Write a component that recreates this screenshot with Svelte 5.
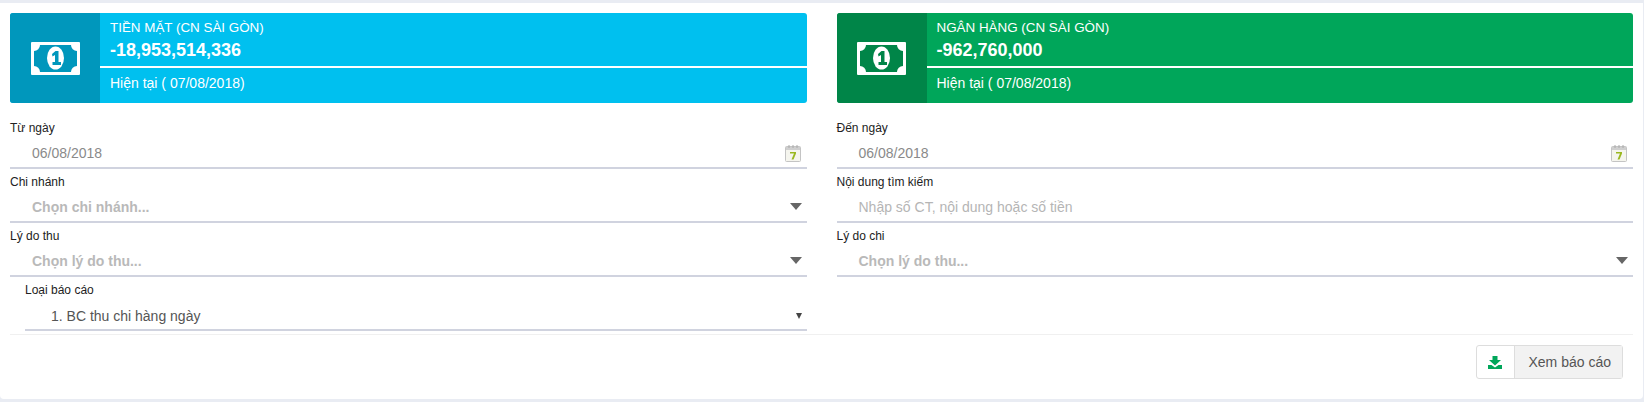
<script>
	const banners = [
		{ title: 'TIỀN MẶT (CN SÀI GÒN)', amount: '-18,953,514,336', tone: 'cash' },
		{ title: 'NGÂN HÀNG (CN SÀI GÒN)', amount: '-962,760,000', tone: 'bank' }
	];
</script>

{#snippet money()}
	<svg class="money" width="49" height="33" viewBox="0 0 49 33">
		<path
			fill="#fff"
			fill-rule="evenodd"
			d="M1 0h47a1 1 0 0 1 1 1v31a1 1 0 0 1-1 1H1a1 1 0 0 1-1-1V1a1 1 0 0 1 1-1zM9 3H40A6 6 0 0 0 46 9V24A6 6 0 0 0 40 30H9A6 6 0 0 0 3 24V9A6 6 0 0 0 9 3z"
		/>
		<ellipse cx="24.500" cy="16" rx="8.500" ry="11.500" fill="#fff" />
		<path class="one" d="M21 12l3.500-3h3v11h2.500v3h-8.500v-3h2.500v-7l-2.500 1.500z" />
	</svg>
{/snippet}

{#snippet calendar()}
	<svg class="cal" width="18" height="18" viewBox="0 0 18 18">
		<rect x="1.500" y="2.500" width="15" height="15" rx="1" fill="#f5f5ee" stroke="#c4c4c4" />
		<rect x="2" y="3" width="14" height="3" fill="#cfcfcf" />
		<path d="M5 1v3M9 1v3M13 1v3" stroke="#aaa" />
		<path d="M6 8h6v1.500l-2.500 6H7.500l2.500-6H6z" fill="#9ab81f" />
	</svg>
{/snippet}

{#snippet caret()}
	<svg class="caret" width="12" height="7" viewBox="0 0 12 7"><path d="M0 0h12L6 7z" fill="#666" /></svg>
{/snippet}

<div class="card">
	<div class="grid">
		{#each banners as b}
			<div class="banner {b.tone}">
				<div class="icon">{@render money()}</div>
				<div class="info">
					<div class="top">
						<div class="title">{b.title}</div>
						<div class="amount">{b.amount}</div>
					</div>
					<div class="now">Hiện tại ( 07/08/2018)</div>
				</div>
			</div>
		{/each}

		<div class="field first">
			<div class="label">Từ ngày</div>
			<div class="control"><span class="value">06/08/2018</span>{@render calendar()}</div>
		</div>
		<div class="field first">
			<div class="label">Đến ngày</div>
			<div class="control"><span class="value">06/08/2018</span>{@render calendar()}</div>
		</div>

		<div class="field">
			<div class="label">Chi nhánh</div>
			<div class="control"><span class="ph">Chọn chi nhánh...</span>{@render caret()}</div>
		</div>
		<div class="field">
			<div class="label">Nội dung tìm kiếm</div>
			<div class="control"><span class="hint">Nhập số CT, nội dung hoặc số tiền</span></div>
		</div>

		<div class="field">
			<div class="label">Lý do thu</div>
			<div class="control"><span class="ph">Chọn lý do thu...</span>{@render caret()}</div>
		</div>
		<div class="field">
			<div class="label">Lý do chi</div>
			<div class="control"><span class="ph">Chọn lý do thu...</span>{@render caret()}</div>
		</div>

		<div class="field report">
			<div class="label">Loại báo cáo</div>
			<div class="control">
				<span class="picked">1. BC thu chi hàng ngày</span>
				<span class="small-caret"></span>
			</div>
		</div>
	</div>

	<div class="footer">
		<button class="view">
			<span class="btn-icon">
				<svg width="14" height="13" viewBox="0 0 14 13">
					<path d="M4.500 0h5v4H13L7 9.500 1 4h3.500z" fill="#00a65a" />
					<path d="M0 9h3.500L7 11.500 10.500 9H14v4H0z" fill="#00a65a" />
				</svg>
			</span>
			<span class="btn-text">Xem báo cáo</span>
		</button>
	</div>
</div>

<style>
	:global(body) {
		background: #e9ecf3;
		font-family: 'Liberation Sans', Arial, sans-serif;
	}

	.card {
		box-sizing: border-box;
		height: 396px;
		margin: 3px 1px 0 0;
		padding: 10px 10px 0;
		background: #fff;
		border-radius: 0 0 4px 4px;
	}

	.grid {
		display: grid;
		grid-template-columns: 1fr 1fr;
		column-gap: 30px;
	}

	.banner {
		display: flex;
		height: 90px;
		border-radius: 3px;
		overflow: hidden;
		color: #fff;
	}

	.cash { background: #00c0ef; }
	.cash .icon { background: #0097bc; }
	.cash .one { fill: #0097bc; }
	.bank { background: #00a65a; }
	.bank .icon { background: #008548; }
	.bank .one { fill: #008548; }

	.icon {
		width: 90px;
		flex: none;
		display: flex;
		align-items: center;
		justify-content: center;
	}

	.info {
		flex: 1;
		display: flex;
		flex-direction: column;
	}

	.top {
		height: 55px;
		box-sizing: border-box;
		padding: 6px 10px 0;
		border-bottom: 2px solid #fff;
	}

	.title {
		font-size: 13.400px;
		line-height: 18px;
	}

	.amount {
		font-size: 18px;
		font-weight: 700;
		line-height: 24px;
		margin-top: 1px;
	}

	.now {
		padding: 5px 10px 0;
		font-size: 14px;
		line-height: 20px;
	}

	.field {
		height: 54px;
		box-sizing: border-box;
		padding-top: 5px;
	}

	.field.first {
		height: 66px;
		padding-top: 17px;
	}

	.label {
		font-size: 12px;
		line-height: 16px;
		color: #222;
	}

	.control {
		box-sizing: border-box;
		display: flex;
		align-items: center;
		justify-content: space-between;
		height: 33px;
		padding: 2px 2px 0 22px;
		font-size: 14px;
		border-bottom: 2px solid #d0d3df;
	}

	.value { color: #8a8a8a; }
	.hint { color: #b5b5b5; }
	.ph { color: #b9b9b9; font-weight: 700; }
	.picked { color: #555; }

	.caret, .cal { margin-right: 3px; }

	.report {
		padding-left: 15px;
		height: 55px;
	}

	.report .control {
		padding-top: 4px;
		padding-left: 26px;
	}

	.small-caret {
		width: 0;
		height: 0;
		margin-right: 3px;
		border-left: 3.500px solid transparent;
		border-right: 3.500px solid transparent;
		border-top: 6px solid #444;
	}

	.footer {
		display: flex;
		justify-content: flex-end;
		margin-top: 2px;
		padding: 10px 10px 0 0;
		border-top: 1px solid #f0f0f0;
	}

	.view {
		display: flex;
		height: 34px;
		padding: 0;
		background: #fff;
		border: 1px solid #ddd;
		border-radius: 3px;
		font: inherit;
		font-size: 14px;
		color: #555;
	}

	.btn-icon {
		width: 38px;
		height: 100%;
		display: flex;
		align-items: center;
		justify-content: center;
		border-right: 1px solid #ddd;
		box-sizing: border-box;
	}

	.btn-text {
		height: 100%;
		display: flex;
		align-items: center;
		padding: 0 11px 0 14px;
		background: #f2f2f2;
	}
</style>
